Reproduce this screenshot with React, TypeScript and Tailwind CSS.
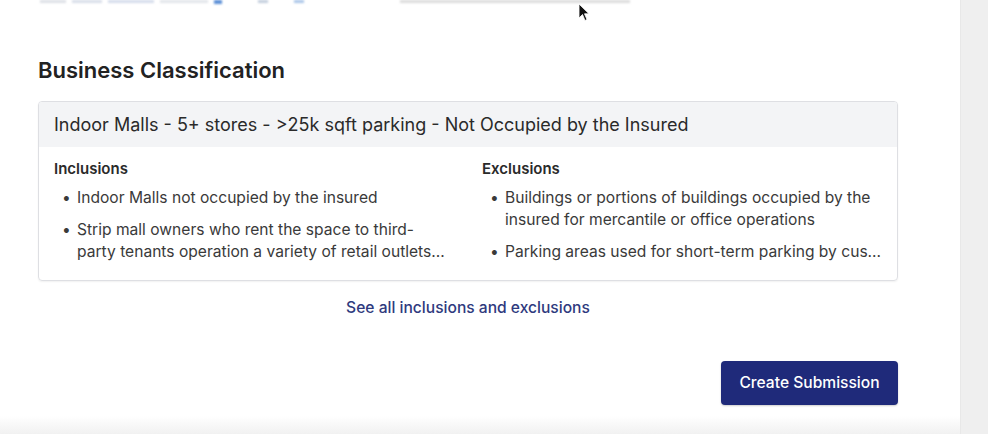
import React from "react";

export default function App() {
  const inclusions: React.ReactNode[] = [
    "Indoor Malls not occupied by the insured",
    <>
      Strip mall owners who rent the space to third-
      <br />
      party tenants operation a variety of retail outlets...
    </>,
  ];
  const exclusions: React.ReactNode[] = [
    "Buildings or portions of buildings occupied by the insured for mercantile or office operations",
    "Parking areas used for short-term parking by cus...",
  ];
  return (
    <div
      className="relative flex h-[434px] w-[988px] overflow-hidden bg-white text-[#2b2b2b]"
      style={{ fontFamily: "Inter, 'Noto Sans', sans-serif" }}
    >
      <div className="relative flex w-[960px] flex-col">
        <div className="flex h-[4px] items-start gap-[6px] pl-[40px] blur-[1px]">
          <div className="h-[3px] w-[26px] bg-[#dde0e6]" />
          <div className="h-[3px] w-[30px] bg-[#d8dee9]" />
          <div className="h-[3px] w-[46px] bg-[#d5dceb]" />
          <div className="h-[3px] w-[48px] bg-[#e2e5ea]" />
          <div className="h-[4px] w-[8px] bg-[#5b8fd6]" />
          <div className="ml-[30px] h-[3px] w-[10px] bg-[#c2cddc]" />
          <div className="ml-[20px] h-[3px] w-[10px] bg-[#a9c5e8]" />
          <div className="ml-[90px] h-[3px] w-[230px] bg-[#dcdcdc]" />
        </div>
        <div className="pl-[38px] pr-[62px]">
          <h2 className="mt-[52px] text-[22px] font-semibold leading-[28px] text-[#222]">
            Business Classification
          </h2>
          <div className="mt-[17px] overflow-hidden rounded-[4px] border border-[#dedfe3] shadow-[0_1px_2px_rgba(0,0,0,0.06)]">
            <div className="flex h-[45px] items-center bg-[#f3f4f6] px-[15px] text-[18px] text-[#2a2a2a]">
              Indoor Malls - 5+ stores - &gt;25k sqft parking - Not Occupied by the Insured
            </div>
            <div className="grid grid-cols-2 gap-x-[28px] px-[15px] pb-[17px] pt-[12px]">
              <Column title="Inclusions" items={inclusions} />
              <Column title="Exclusions" items={exclusions} />
            </div>
          </div>
          <div className="mt-[16px] text-center text-[15.6px] font-medium leading-[22px] text-[#2f3a7e]">
            See all inclusions and exclusions
          </div>
          <div className="mt-[42px] flex justify-end">
            <button className="h-[44px] w-[177px] rounded-[4px] bg-[#1f2a7a] text-[15.6px] font-medium text-white shadow-[0_1px_2px_rgba(0,0,0,0.2)]">
              Create Submission
            </button>
          </div>
        </div>
        <div className="absolute bottom-0 left-0 h-[18px] w-full bg-gradient-to-b from-white to-[#f1f1f1]" />
      </div>
      <div className="flex-1 border-l border-[#e8e8e8] bg-[#efefef]" />
      <svg
        className="absolute left-[578px] top-[3px]"
        width="12"
        height="20"
        viewBox="0 0 12 20"
      >
        <path d="M1 1 L1 15 L4.5 11.5 L7 17.5 L9 16.5 L6.5 10.8 L11 10.8 Z" fill="#111" stroke="#fff" strokeWidth="0.8" />
      </svg>
    </div>
  );
}

function Column({ title, items }: { title: string; items: React.ReactNode[] }) {
  return (
    <div>
      <div className="text-[15px] font-semibold leading-[20px] text-[#2a2a2a]">{title}</div>
      <ul className="mt-[8px] flex flex-col gap-[10px]">
        {items.map((t, i) => (
          <li key={i} className="flex text-[15.6px] leading-[22px] text-[#3a3a3a]">
            <span className="w-[23px] shrink-0 pl-[8px]">•</span>
            <span>{t}</span>
          </li>
        ))}
      </ul>
    </div>
  );
}
